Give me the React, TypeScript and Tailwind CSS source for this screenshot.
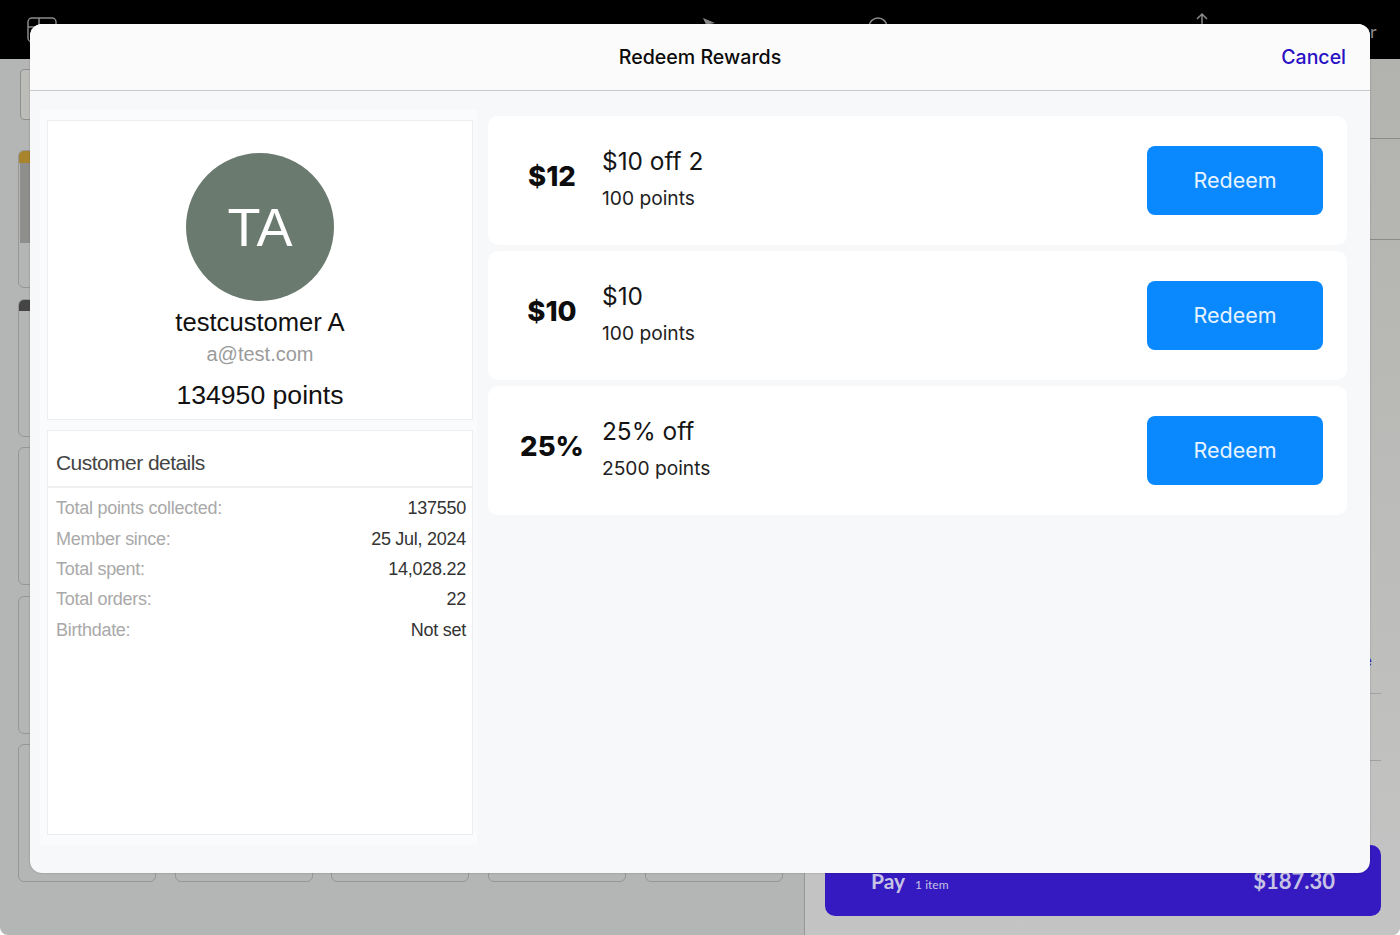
const rewards = [
  { badge: "$12", title: "$10 off 2", points: "100 points" },
  { badge: "$10", title: "$10", points: "100 points" },
  { badge: "25%", title: "25% off", points: "2500 points" },
];

const details = [
  { label: "Total points collected:", value: "137550" },
  { label: "Member since:", value: "25 Jul, 2024" },
  { label: "Total spent:", value: "14,028.22" },
  { label: "Total orders:", value: "22" },
  { label: "Birthdate:", value: "Not set" },
];

const tiles = Array.from({ length: 25 }, (_, i) => i);

export default function App() {
  return (
    <div className="relative h-[935px] w-[1400px] overflow-hidden bg-white font-['Inter',sans-serif]">
      <Background />
      <div className="absolute left-[30px] top-[24px] flex h-[849px] w-[1340px] flex-col overflow-hidden rounded-[12px] bg-[#f7f8fa] shadow-[0_0_2px_rgba(0,0,0,0.25)]">
        <div className="flex h-[67px] shrink-0 items-center justify-end border-b border-[#c9c9ca] bg-[#fbfbfb] pr-[24px] pt-[2px] relative">
          <div className="absolute inset-x-0 text-center text-[19.6px] font-medium text-[#0b0b0b]">
            Redeem Rewards
          </div>
          <button className="relative text-[19.5px] font-medium text-[#2a10c4]">Cancel</button>
        </div>
        <div className="flex flex-1 items-start pl-[10px] pt-[19px]">
          <CustomerPanel />
          <div className="ml-[11px] flex w-[859px] flex-col gap-[6px] pt-[6px]">
            {rewards.map((r) => (
              <RewardRow key={r.badge} {...r} />
            ))}
          </div>
        </div>
      </div>
    </div>
  );
}

function CustomerPanel() {
  return (
    <div className="flex h-[735px] w-[437px] flex-col gap-[10px] bg-[#fafbfd] pb-[10px] pl-[7px] pr-[4px] pt-[10px] font-['Liberation_Sans',sans-serif]">
      <div className="flex h-[300px] flex-col items-center border border-[#eceef2] bg-white pt-[32px]">
        <div className="flex h-[148px] w-[148px] items-center justify-center rounded-full bg-[#6a7a6e] text-[54px] text-white">
          TA
        </div>
        <div className="mt-[6px] text-[25.6px] leading-[30px] text-[#111]">testcustomer A</div>
        <div className="mt-[5px] text-[20px] leading-[24px] text-[#9b9b9b]">a@test.com</div>
        <div className="mt-[14px] text-[26.6px] leading-[30px] text-[#111]">134950 points</div>
      </div>
      <div className="flex flex-1 flex-col border border-[#eceef2] bg-white">
        <div className="flex h-[57px] shrink-0 items-end border-b-2 border-[#eeeff1] pb-[10px] pl-[8px] text-[21px] leading-[26px] tracking-[-0.55px] text-[#444]">
          Customer details
        </div>
        <div className="flex flex-col pl-[8px] pr-[6px] pt-[5.5px]">
          {details.map((d) => (
            <div key={d.label} className="flex h-[30.4px] items-center justify-between text-[18px] tracking-[-0.27px]">
              <span className="text-[#a9a9a9]">{d.label}</span>
              <span className="text-[#333]">{d.value}</span>
            </div>
          ))}
        </div>
      </div>
    </div>
  );
}

function RewardRow({ badge, title, points }: { badge: string; title: string; points: string }) {
  return (
    <div className="flex h-[129px] items-center rounded-[10px] bg-white pr-[24px]">
      <div className="w-[114px] pb-[8px] pl-[14px] text-center text-[27.5px] font-extrabold text-[#0d0d0d]">{badge}</div>
      <div className="flex flex-1 flex-col gap-[10px] pb-[6px]">
        <div className="text-[24.4px] leading-[30px] text-[#151515]">{title}</div>
        <div className="text-[19.2px] leading-[24px] text-[#222]">{points}</div>
      </div>
      <button className="h-[69px] w-[176px] rounded-[8px] bg-[#0a89ff] text-[21.5px] text-[#e6f3ff]">Redeem</button>
    </div>
  );
}

function Background() {
  return (
    <div className="flex h-full flex-col overflow-hidden rounded-b-[8px] bg-[#b4b5b5]">
      <div className="flex h-[59px] shrink-0 items-start bg-black pl-[27px] pt-[15px] text-[#8a8a8a]">
        <svg width="30" height="30" viewBox="0 0 30 30" fill="none" stroke="currentColor" strokeWidth="1.5">
          <rect x="1" y="3" width="28" height="24" rx="4" />
          <path d="M12 3v24M1 12h11" />
        </svg>
        <svg className="ml-[645px]" width="14" height="14" viewBox="0 0 14 14" fill="currentColor">
          <path d="M1 3l12 5-5 1-2 5z" />
        </svg>
        <svg className="ml-[152px]" width="20" height="20" viewBox="0 0 20 20" fill="none" stroke="currentColor" strokeWidth="1.5">
          <circle cx="10" cy="12" r="9" />
        </svg>
        <svg className="ml-[306px] -mt-[3px]" width="16" height="20" viewBox="0 0 16 20" fill="none" stroke="currentColor" strokeWidth="1.5">
          <path d="M8 16V2M3 7l5-5 5 5" />
        </svg>
        <span className="ml-[160px] mt-[3px] text-[18px] font-['Lato',sans-serif]">r</span>
      </div>
      <div className="flex flex-1">
        <div className="flex w-[805px] flex-col border-r border-[#969696] pl-[18px] pt-[10px]">
          <div className="ml-[2px] h-[51px] w-[120px] rounded-[4px] border border-[#8d8e8d] bg-[#bcbdb9]" />
          <div className="mt-[30px] grid grid-cols-[repeat(5,138px)] grid-rows-[repeat(5,138px)] gap-x-[18.7px] gap-y-[10.5px]">
            {tiles.map((i) => (
              <div key={i} className="overflow-hidden rounded-[6px] border border-[#959695]">
                {i === 0 && (
                  <>
                    <div className="h-[12px] bg-[#a8842c]" />
                    <div className="ml-[1px] h-[80px] bg-[#8e8f8d]" />
                  </>
                )}
                {i === 5 && <div className="h-[11px] bg-[#454545]" />}
              </div>
            ))}
          </div>
        </div>
        <div className="flex flex-1 flex-col bg-linear-to-b from-[#b2b3ae] to-[#c4c4c4] pl-[20px] pr-[19px]">
          <div className="mt-[79px] h-px bg-[#8b8c8a] -mr-[19px]" />
          <div className="mt-[100px] h-px bg-[#8b8c8a] -mr-[19px]" />
          <div className="flex h-[453px] items-end justify-end pb-[22px] pr-[9px] text-[14px] text-[#341ac0]">e</div>
          <div className="h-px bg-[#a1a1a1]" />
          <div className="mt-[66px] h-px bg-[#a1a1a1]" />
          <div className="mt-[84px] flex h-[71px] items-center justify-between rounded-[10px] bg-[#341ac0] pl-[46px] pr-[46px] font-['Lato',sans-serif] text-[#c6c3e4]">
            <div className="flex items-baseline gap-[10px]">
              <span className="text-[21px] font-bold">Pay</span>
              <span className="text-[12px]">1 item</span>
            </div>
            <span className="text-[22px] font-bold">$187.30</span>
          </div>
        </div>
      </div>
    </div>
  );
}
